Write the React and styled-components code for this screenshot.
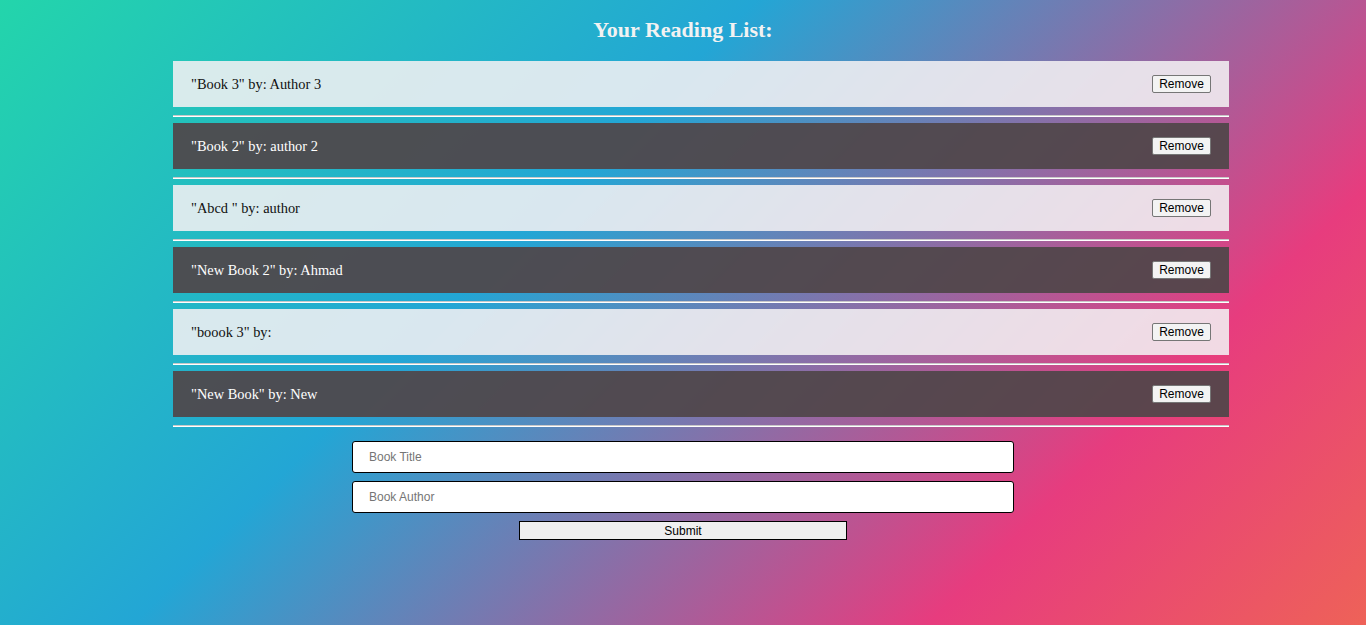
import React from "react";
import styled, { createGlobalStyle } from "styled-components";

const Global = createGlobalStyle`
  html, body { margin: 0; padding: 0; }
  body { font-family: "Liberation Serif", "Times New Roman", serif; }
  * { box-sizing: border-box; }
`;

const Page = styled.div`
  min-height: 625px;
  background: linear-gradient(-45deg, #ee6258 0%, #e73c7e 22%, #23a6d5 62%, #23d5ab 100%);
`;

const Title = styled.h2`
  margin: 0;
  padding: 15px 0 16px;
  line-height: 30px;
  font-size: 22px;
  font-weight: bold;
  text-align: center;
  color: #f2f2f2;
`;

const List = styled.ul`
  list-style: none;
  margin: 0 auto;
  width: 1092px;
  padding: 0 0 0 36px;
`;

const Item = styled.li`
  display: flex;
  align-items: center;
  justify-content: space-between;
  height: 46px;
  padding: 0 18px;
  font-size: 14.4px;
  background: ${(p) => (p.$dark ? "rgba(80, 70, 73, 0.93)" : "rgba(243, 240, 243, 0.88)")};
  color: ${(p) => (p.$dark ? "#ffffff" : "#111111")};
`;

const Divider = styled.hr`
  margin: 8px 0 6px;
  height: 2px;
  border: none;
  border-top: 1px solid #c8c8c8;
  border-bottom: 1px solid #ffffff;
`;

const RemoveButton = styled.button`
  font-family: Arial, "Liberation Sans", sans-serif;
  font-size: 12px;
  height: 18px;
  width: 59px;
  padding: 0;
  background: #f3f3f3;
  color: #000;
  border: 1px solid #767676;
  border-radius: 2px;
`;

const Form = styled.form`
  display: flex;
  flex-direction: column;
  align-items: center;
  gap: 8px;
  margin-top: 14px;
`;

const Input = styled.input`
  width: 662px;
  height: 32px;
  border: 1px solid #000;
  border-radius: 3px;
  background: #fff;
  padding: 0 16px;
  font-family: Arial, "Liberation Sans", sans-serif;
  font-size: 12px;
  &::placeholder { color: #757575; }
`;

const Submit = styled.button`
  width: 328px;
  height: 19px;
  padding: 0;
  border: 1px solid #000;
  border-radius: 0;
  background: #efefef;
  font-family: Arial, "Liberation Sans", sans-serif;
  font-size: 12px;
  color: #000;
`;

const books = [
  { title: "Book 3", author: "Author 3" },
  { title: "Book 2", author: "author 2" },
  { title: "Abcd ", author: "author" },
  { title: "New Book 2", author: "Ahmad" },
  { title: "boook 3", author: "" },
  { title: "New Book", author: "New" },
];

export default function App() {
  return (
    <Page>
      <Global />
      <Title>Your Reading List:</Title>
      <List>
        {books.map((b, i) => (
          <React.Fragment key={i}>
            <Item $dark={i % 2 === 1}>
              <span>
                "{b.title}" by: {b.author}
              </span>
              <RemoveButton type="button">Remove</RemoveButton>
            </Item>
            <Divider />
          </React.Fragment>
        ))}
      </List>
      <Form onSubmit={(e) => e.preventDefault()}>
        <Input placeholder="Book Title" />
        <Input placeholder="Book Author" />
        <Submit type="submit">Submit</Submit>
      </Form>
    </Page>
  );
}
